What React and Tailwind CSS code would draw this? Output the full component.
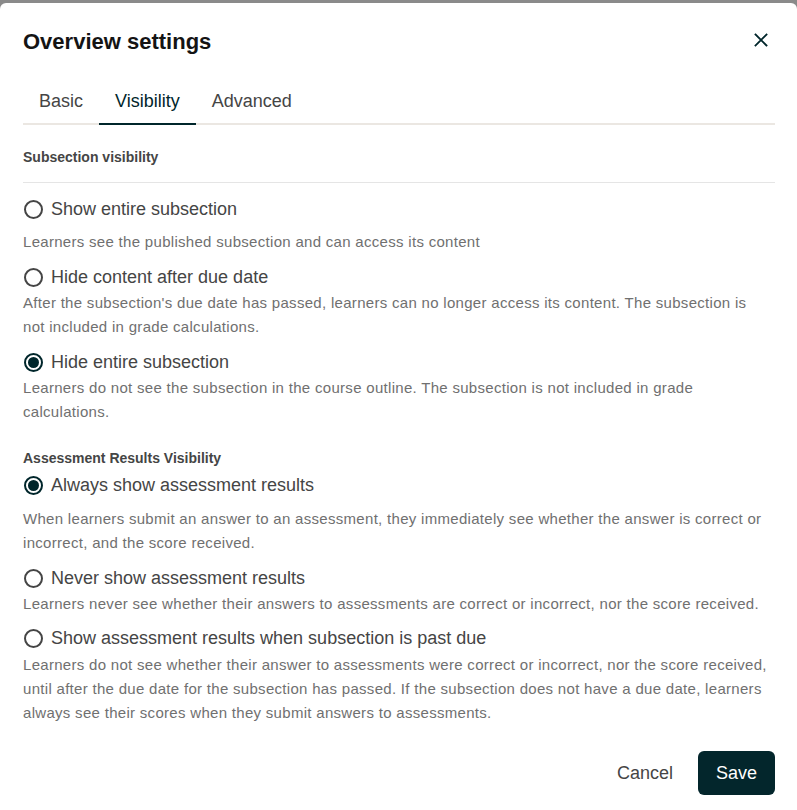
import React, { useState } from 'react';

const subsectionOptions = [
  {
    id: 'show',
    label: 'Show entire subsection',
    desc: 'Learners see the published subsection and can access its content',
    descGap: 'mt-[9px]',
  },
  {
    id: 'hide-after-due',
    label: 'Hide content after due date',
    desc: "After the subsection's due date has passed, learners can no longer access its content. The subsection is not\u00a0included in grade calculations.",
    descGap: 'mt-[2px]',
  },
  {
    id: 'hide',
    label: 'Hide entire subsection',
    desc: 'Learners do not see the subsection in the course outline. The subsection is not included in grade calculations.',
    descGap: 'mt-[2px]',
  },
];

const assessmentOptions = [
  {
    id: 'always',
    label: 'Always show assessment results',
    desc: 'When learners submit an answer to an assessment, they immediately see whether the answer is correct or incorrect, and the score received.',
    descGap: 'mt-[10px]',
  },
  {
    id: 'never',
    label: 'Never show assessment results',
    desc: 'Learners never see whether their answers to assessments are correct or incorrect, nor the score received.',
    descGap: 'mt-[2px]',
  },
  {
    id: 'past-due',
    label: 'Show assessment results when subsection is past due',
    desc: 'Learners do not see whether their answer to assessments were correct or incorrect, nor the score received, until after the due date for the subsection has passed. If the subsection does not have a due date, learners always see their scores when they submit answers to assessments.',
    descGap: 'mt-[3px]',
  },
];

const RadioDot = ({ checked }) => (
  <span
    className={`flex h-[19px] w-[19px] shrink-0 items-center justify-center rounded-full border-2 ${
      checked ? 'border-[#00262b]' : 'border-[#454545]'
    }`}
  >
    {checked && <span className="h-[11px] w-[11px] rounded-full bg-[#00262b]" />}
  </span>
);

const RadioOption = ({ option, checked, onSelect, className }) => (
  <div className={className}>
    <label className="flex cursor-pointer items-center gap-[8px]" onClick={() => onSelect(option.id)}>
      <span className="pl-[1px]">
        <RadioDot checked={checked} />
      </span>
      <span className="text-[18px] leading-[24px] text-[#454545]">{option.label}</span>
    </label>
    <p className={`${option.descGap} text-[15px] leading-[24px] tracking-[0.3px] text-[#707070]`}>{option.desc}</p>
  </div>
);

export default function App() {
  const [tab, setTab] = useState('Visibility');
  const [visibility, setVisibility] = useState('hide');
  const [results, setResults] = useState('always');

  const tabs = ['Basic', 'Visibility', 'Advanced'];

  return (
    <div className="min-h-[810px] bg-[#8a8a8a] pt-[3px]" style={{ fontFamily: '"Liberation Sans", Arial, sans-serif' }}>
      <div className="h-[807px] overflow-hidden rounded-t-[6px] bg-white pl-[23px] pr-[22px]">
        {/* header */}
        <div className="flex items-start justify-between pt-[25px]">
          <h2 className="text-[22px] font-bold leading-[28px] text-[#141414]">Overview settings</h2>
          <button type="button" className="mr-[6px] mt-[4px] text-[#00262b]" aria-label="Close">
            <svg width="16" height="16" viewBox="0 0 16 16" fill="none" stroke="currentColor" strokeWidth="1.8" strokeLinecap="square">
              <path d="M2.5 2.5l11 11M13.5 2.5l-11 11" />
            </svg>
          </button>
        </div>

        {/* tabs */}
        <div className="mt-[25px] flex border-b-2 border-[#ebe7e2]">
          {tabs.map((t) => (
            <button
              key={t}
              type="button"
              onClick={() => setTab(t)}
              className={`-mb-[2px] border-b-2 px-4 pb-[10px] pt-2 text-[18px] leading-[24px] ${
                tab === t ? 'border-[#00262b] text-[#00262b]' : 'border-transparent text-[#454545]'
              }`}
            >
              {t}
            </button>
          ))}
        </div>

        {/* subsection visibility */}
        <h3 className="mt-[22px] text-[14px] font-bold leading-[20px] text-[#454545]">Subsection visibility</h3>
        <div className="mt-[15px] border-t border-[#e5e5e5]" />
        <div className="mt-[14px]">
          {subsectionOptions.map((opt, i) => (
            <RadioOption
              key={opt.id}
              option={opt}
              checked={visibility === opt.id}
              onSelect={setVisibility}
              className={i === 0 ? '' : 'mt-[11px]'}
            />
          ))}
        </div>

        {/* assessment results */}
        <h3 className="mt-[24px] text-[14px] font-bold leading-[20px] text-[#454545]">Assessment Results Visibility</h3>
        <div className="mt-[5px]">
          {assessmentOptions.map((opt, i) => (
            <RadioOption
              key={opt.id}
              option={opt}
              checked={results === opt.id}
              onSelect={setResults}
              className={i === 0 ? '' : i === 1 ? 'mt-[11px]' : 'mt-[10px]'}
            />
          ))}
        </div>

        {/* footer */}
        <div className="mt-[26px] flex items-center justify-end gap-[7px]">
          <button type="button" className="h-[44px] rounded-[6px] px-[18px] text-[18px] text-[#454545]">
            Cancel
          </button>
          <button type="button" className="h-[44px] rounded-[6px] bg-[#03262c] px-[18px] text-[18px] text-white">
            Save
          </button>
        </div>
      </div>
    </div>
  );
}
